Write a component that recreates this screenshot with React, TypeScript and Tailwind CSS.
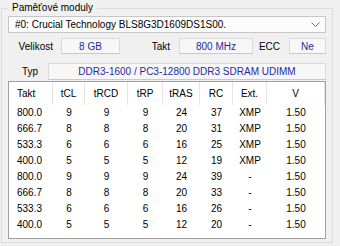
import React from 'react';

interface Timing {
  takt: string;
  cl: number;
  rcd: number;
  rp: number;
  ras: number;
  rc: number;
  ext: string;
  v: string;
}

const timings: Timing[] = [
  { takt: '800.0', cl: 9, rcd: 9, rp: 9, ras: 24, rc: 37, ext: 'XMP', v: '1.50' },
  { takt: '666.7', cl: 8, rcd: 8, rp: 8, ras: 20, rc: 31, ext: 'XMP', v: '1.50' },
  { takt: '533.3', cl: 6, rcd: 6, rp: 6, ras: 16, rc: 25, ext: 'XMP', v: '1.50' },
  { takt: '400.0', cl: 5, rcd: 5, rp: 5, ras: 12, rc: 19, ext: 'XMP', v: '1.50' },
  { takt: '800.0', cl: 9, rcd: 9, rp: 9, ras: 24, rc: 39, ext: '-', v: '1.50' },
  { takt: '666.7', cl: 8, rcd: 8, rp: 8, ras: 20, rc: 33, ext: '-', v: '1.50' },
  { takt: '533.3', cl: 6, rcd: 6, rp: 6, ras: 16, rc: 26, ext: '-', v: '1.50' },
  { takt: '400.0', cl: 5, rcd: 5, rp: 5, ras: 12, rc: 20, ext: '-', v: '1.50' },
];

// column widths in px, must be written out for tailwind
const cols = [
  { label: 'Takt', cls: 'w-[44px] pl-[8px] text-left' },
  { label: 'tCL', cls: 'w-[32px] text-center' },
  { label: 'tRCD', cls: 'w-[43px] text-center' },
  { label: 'tRP', cls: 'w-[35px] text-center' },
  { label: 'tRAS', cls: 'w-[37px] text-center' },
  { label: 'RC', cls: 'w-[33px] text-center' },
  { label: 'Ext.', cls: 'w-[34px] text-center' },
  { label: 'V', cls: 'w-[58px] text-center' },
];

function ValueBox({ children, className = '' }: { children: React.ReactNode; className?: string }) {
  return (
    <div
      className={`h-full flex items-center justify-center bg-[#f7f7f7] border border-[#dadada] border-b-[#c9c9c9] text-[#1f2a9e] ${className}`}
    >
      {children}
    </div>
  );
}

export default function App() {
  return (
    <div className="w-[340px] h-[246px] bg-[#f0f0f0] pt-[1px] pl-[1px] font-['Liberation_Sans',Arial,sans-serif] text-[10px] text-black overflow-hidden">
      <fieldset className="w-[332px] h-[242px] border border-[#dcdcdc] px-[6px] pt-[1px]">
        <legend className="px-[4px] leading-[14px]">Paměťové moduly</legend>

        {/* Module dropdown */}
        <div className="h-[17px] flex items-center bg-[#fcfcfc] border border-[#c6c6c6] pl-[6px] pr-[5px]">
          <span className="flex-1 truncate">#0: Crucial Technology BLS8G3D1609DS1S00.</span>
          <svg width="9" height="5" viewBox="0 0 9 5" className="ml-1">
            <path d="M0.5 0.5 L4.5 4.5 L8.5 0.5" fill="none" stroke="#707070" strokeWidth="1" />
          </svg>
        </div>

        {/* Size / clock / ECC */}
        <div className="h-[16px] mt-[5px] flex">
          <div className="w-[53px] pr-[8px] text-right self-center">Velikost</div>
          <ValueBox className="w-[59px]">8 GB</ValueBox>
          <div className="w-[59px] pr-[9px] text-right self-center">Takt</div>
          <ValueBox className="w-[74px]">800 MHz</ValueBox>
          <div className="w-[36px] pr-[9px] text-right self-center">ECC</div>
          <ValueBox className="w-[37px]">Ne</ValueBox>
        </div>

        {/* Type */}
        <div className="h-[17px] mt-[9px] flex">
          <div className="w-[40px] pr-[10px] text-right self-center">Typ</div>
          <ValueBox className="flex-1">DDR3-1600 / PC3-12800 DDR3 SDRAM UDIMM</ValueBox>
        </div>

        {/* Timings list */}
        <div className="h-[158px] mt-[1px] bg-white border border-[#a0a0a0]">
          <div className="h-[23px] flex">
            {cols.map((c) => (
              <div key={c.label} className={`${c.cls} h-full leading-[23px] border-r border-[#e5e5e5]`}>
                {c.label}
              </div>
            ))}
          </div>
          {timings.map((t, i) => (
            <div key={i} className="h-[16px] flex leading-[16px]">
              <div className={cols[0].cls}>{t.takt}</div>
              <div className={cols[1].cls}>{t.cl}</div>
              <div className={cols[2].cls}>{t.rcd}</div>
              <div className={cols[3].cls}>{t.rp}</div>
              <div className={cols[4].cls}>{t.ras}</div>
              <div className={cols[5].cls}>{t.rc}</div>
              <div className={cols[6].cls}>{t.ext}</div>
              <div className={cols[7].cls}>{t.v}</div>
            </div>
          ))}
        </div>
      </fieldset>
    </div>
  );
}
